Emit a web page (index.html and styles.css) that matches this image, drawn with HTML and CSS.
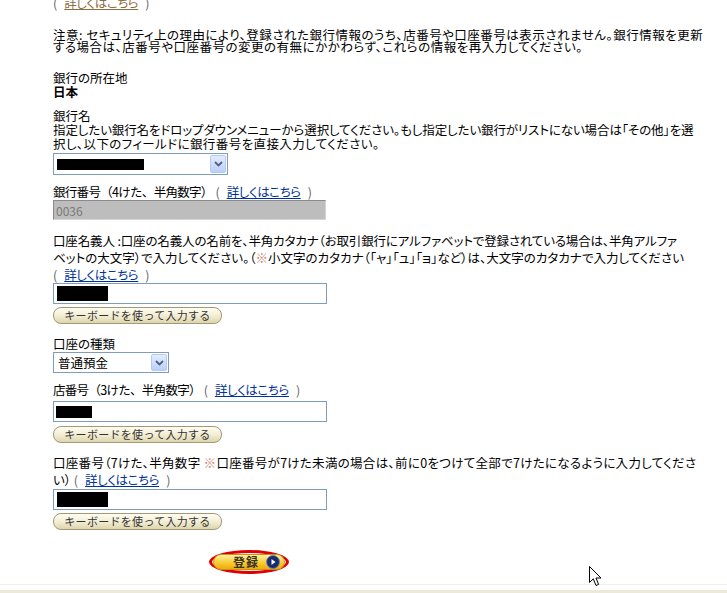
FILE: index.html
```html
<!DOCTYPE html>
<html lang="ja">
<head>
<meta charset="utf-8">
<title>銀行情報</title>
<link rel="stylesheet" href="styles.css">
</head>
<body>
<div class="page">
  <main class="content">
    <p class="toplink"><span class="paren open">(</span><a class="link visited">詳しくはこちら</a><span class="paren close">)</span></p>

    <p class="notice">注意: セキュリティ上の理由により、登録された銀行情報のうち、店番号や口座番号は表示されません。銀行情報を更新<br>する場合は、店番号や口座番号の変更の有無にかかわらず、これらの情報を再入力してください。</p>

    <div class="location">
      <p class="line">銀行の所在地</p>
      <p class="line strong">日本</p>
    </div>

    <p class="bankname">銀行名<br><span class="ls-tight">指定したい銀行名をドロップダウンメニューから選択してください。もし指定したい銀行がリストにない場合は「その他」を選</span><br><span class="ls-loose">択し、以下のフィールドに銀行番号を直接入力してください。</span></p>
    <div class="select select-bank"><span class="redact redact-bank"></span><span class="select-btn"><svg width="9" height="6" viewBox="0 0 9 6"><path d="M1 1 L4.5 4.5 L8 1" fill="none" stroke="#4d6185" stroke-width="1.8"/></svg></span></div>

    <p class="label label-bankno"><span class="fw">銀行番号（4けた、半角数字）</span> <span class="paren open">(</span><a class="link">詳しくはこちら</a><span class="paren close">)</span></p>
    <div class="input disabled">0036</div>

    <p class="para holder"><span class="ls-tight2">口座名義人 :口座の名義人の名前を、半角カタカナ（お取引銀行にアルファベットで登録されている場合は、半角アルファ</span><br>ベットの大文字）で入力してください。（<span class="mark">※</span>小文字のカタカナ（「ャ」「ュ」「ョ」など）は、大文字のカタカナで入力してください<br><span class="paren open">(</span><a class="link">詳しくはこちら</a><span class="paren close">)</span></p>
    <div class="input"><span class="redact redact-holder"></span></div>
    <button class="kbd-btn" type="button">キーボードを使って入力する</button>

    <p class="label label-type">口座の種類</p>
    <div class="select select-type"><span class="select-text">普通預金</span><span class="select-btn"><svg width="9" height="6" viewBox="0 0 9 6"><path d="M1 1 L4.5 4.5 L8 1" fill="none" stroke="#4d6185" stroke-width="1.8"/></svg></span></div>

    <p class="label label-branch"><span class="fw">店番号（3けた、半角数字）</span> <span class="paren open">(</span><a class="link">詳しくはこちら</a><span class="paren close">)</span></p>
    <div class="input input-branch"><span class="redact redact-branch"></span></div>
    <button class="kbd-btn" type="button">キーボードを使って入力する</button>

    <p class="para account"><span class="ls-loose2">口座番号（7けた、半角数字 <span class="mark">※</span>口座番号が7けた未満の場合は、前に0をつけて全部で7けたになるように入力してくださ</span><br>い） <span class="paren open">(</span><a class="link">詳しくはこちら</a><span class="paren close">)</span></p>
    <div class="input input-account"><span class="redact redact-holder"></span></div>
    <button class="kbd-btn" type="button">キーボードを使って入力する</button>

    <div class="submit-row">
      <div class="ellipse">
        <button class="submit-btn" type="button"><span class="submit-text">登録</span><span class="go"><svg width="14" height="14" viewBox="0 0 14 14"><circle cx="7" cy="7" r="6.5" fill="#1b2a6b" stroke="#6f7fb8" stroke-width="1"/><path d="M5.5 4 L9.5 7 L5.5 10 Z" fill="#fff"/></svg></span></button>
      </div>
    </div>
  </main>
  <div class="footer"><div class="footer-band"></div></div>
  <svg class="cursor" width="13" height="21" viewBox="0 0 13 21"><path d="M0.5 0.5 L0.5 16.5 L4.3 12.8 L7 19.5 L9.6 18.4 L7 12 L12 12 Z" fill="#fff" stroke="#000" stroke-width="1"/></svg>
</div>
</body>
</html>
```

FILE: styles.css
```css
html, body {
  margin: 0;
  padding: 0;
  background: #fff;
}

body {
  font-family: "Noto Sans CJK JP", "Noto Sans", sans-serif;
  font-size: 12.5px;
  font-feature-settings: "palt";
  color: #000;
  overflow: hidden;
}

p {
  margin: 0;
}

.page {
  position: relative;
  width: 727px;
  height: 593px;
  overflow: hidden;
  display: flex;
  flex-direction: column;
}

.content {
  flex: 1;
  padding-left: 53px;
  white-space: nowrap;
  min-height: 0;
}

.paren {
  color: #666;
}

.paren.open {
  margin-right: 7px;
}

.paren.close {
  margin-left: 7px;
}

.link {
  color: #003399;
  text-decoration: underline;
  letter-spacing: -0.4px;
}

.link.visited {
  color: #8c6d3f;
}

.mark {
  color: #d0806a;
}

.fw {
  font-feature-settings: normal;
  letter-spacing: -0.7px;
}

.ls-tight {
  letter-spacing: -0.1px;
}

.ls-tight2 {
  letter-spacing: -0.15px;
}

.ls-loose {
  letter-spacing: 0.4px;
}

.ls-loose2 {
  letter-spacing: 0.3px;
}

.toplink {
  margin-top: -4px;
  line-height: 14px;
}

.notice {
  margin-top: 19px;
  line-height: 12px;
  letter-spacing: 0.5px;
}

.location {
  margin-top: 18px;
  line-height: 14px;
}

.strong {
  font-weight: bold;
}

.bankname {
  margin-top: 10px;
  line-height: 14px;
}

.select {
  box-sizing: border-box;
  height: 22px;
  border: 1px solid #7f9db9;
  background: #fff;
  display: flex;
  align-items: center;
  padding: 1px;
}

.select-bank {
  width: 175px;
  margin-top: 2px;
}

.select-type {
  width: 116px;
  margin-top: 1px;
  height: 21px;
}

.select-text {
  flex: 1;
  padding-left: 3px;
  font-size: 12.5px;
  font-feature-settings: normal;
}

.select-btn {
  margin-left: auto;
  box-sizing: border-box;
  width: 16px;
  height: 100%;
  border: 1px solid #b6c9f5;
  border-radius: 2px;
  background: linear-gradient(#e4ecfe, #bccff9);
  display: flex;
  align-items: center;
  justify-content: center;
}

.redact {
  display: block;
  background: #000;
}

.redact-bank {
  width: 87px;
  height: 11px;
  margin-left: 2px;
}

.label {
  line-height: 14px;
}

.label-bankno {
  margin-top: 10px;
}

.input {
  box-sizing: border-box;
  width: 274px;
  height: 21px;
  border: 1px solid #7f9db9;
  background: #fff;
  display: flex;
  align-items: center;
  padding-left: 2px;
}

.input.disabled {
  width: 273px;
  height: 20px;
  margin-top: 1px;
  background: #bdbdbd;
  border-color: #8a8a8a #d4d4d4 #d4d4d4 #8a8a8a;
  color: #7a7a7a;
  font-size: 12px;
}

.holder {
  margin-top: 12px;
  line-height: 17px;
}

.redact-holder {
  width: 51px;
  height: 15px;
  margin-left: 1px;
}

.redact-branch {
  width: 36px;
  height: 12px;
}

.kbd-btn {
  display: block;
  box-sizing: border-box;
  width: 169px;
  height: 17px;
  margin-top: 3px;
  padding: 0;
  border: 1px solid #a09a78;
  border-radius: 8px;
  background: linear-gradient(#fffdf0, #f1ecd2 55%, #ddd5ad);
  font-family: "Noto Sans CJK JP", "Noto Sans", sans-serif;
  font-size: 11px;
  line-height: 15px;
  letter-spacing: 0.3px;
  color: #333;
  text-align: center;
}

.label-type {
  margin-top: 13px;
}

.label-branch {
  margin-top: 10px;
}

.input-branch {
  margin-top: 4px;
}

.input-branch + .kbd-btn {
  margin-top: 4px;
}

.input-account + .kbd-btn {
  margin-top: 3px;
}

.account {
  margin-top: 11px;
  line-height: 17px;
}

.input-account {
  margin-top: 1px;
}

.submit-row {
  margin-top: 20px;
  padding-left: 156px;
}

.ellipse {
  box-sizing: border-box;
  width: 80px;
  height: 24px;
  border: 3px solid #e00000;
  border-radius: 50%;
  display: flex;
  align-items: center;
  justify-content: center;
}

.submit-btn {
  box-sizing: border-box;
  width: 72px;
  height: 16px;
  padding: 0 4px 0 0;
  border: 1px solid #c49615;
  border-radius: 8px;
  background: linear-gradient(#fff2a8, #f9cf3c 50%, #eeab08);
  display: flex;
  align-items: center;
  justify-content: flex-end;
  gap: 7px;
}

.submit-text {
  font-family: "Noto Sans CJK JP", "Noto Sans", sans-serif;
  font-size: 12px;
  font-weight: bold;
  letter-spacing: 1px;
  color: #3a3320;
  line-height: 14px;
}

.go {
  display: flex;
}

.footer {
  height: 8px;
  border-top: 1px solid #f0efe8;
  display: flex;
  flex-direction: column;
  justify-content: flex-end;
}

.footer-band {
  height: 3px;
  background: #ece9d8;
}

.cursor {
  position: absolute;
  left: 589px;
  top: 566px;
}
```
